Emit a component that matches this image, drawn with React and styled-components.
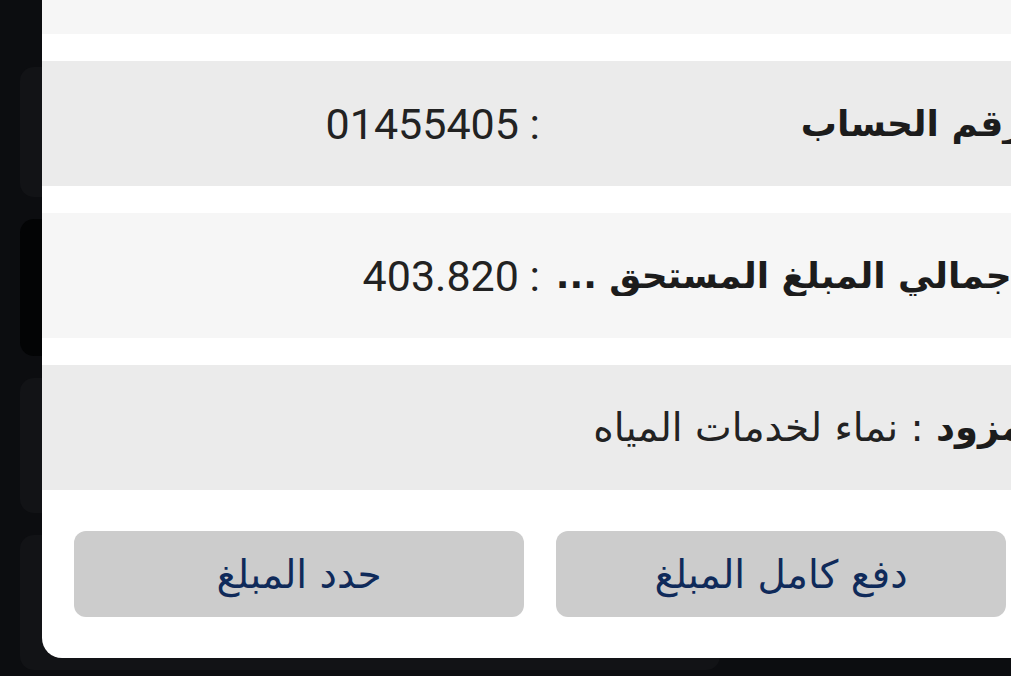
import React from 'react'
import styled, { createGlobalStyle } from 'styled-components'

const GlobalStyle = createGlobalStyle`
    html, body {
        margin: 0;
        padding: 0;
        width: 1011px;
        height: 676px;
        overflow: hidden;
        background: #0c0d10;
    }
    * {
        box-sizing: border-box;
    }
`

const arabic = `"DejaVu Sans", "Noto Sans Arabic", sans-serif`

const Screen = styled.div`
    position: relative;
    width: 1011px;
    height: 676px;
    overflow: hidden;
    background: #0c0d10;
`

const CardList = styled.div`
    display: flex;
    flex-direction: column;
    gap: 22px;
    padding: 67px 0 0 20px;
`

const BgCard = styled.div`
    height: ${p => p.h}px;
    width: 700px;
    border-radius: 14px;
    background: ${p => p.dark ? '#030405' : '#121316'};
`

const Sheet = styled.div`
    position: absolute;
    left: 42px;
    bottom: 18px;
    width: 996px;
    background: #ffffff;
    border-radius: 20px;
    display: flex;
    flex-direction: column;
    gap: 27px;
    direction: rtl;
`

const Row = styled.div`
    height: 125px;
    background: ${p => p.shade === 'dark' ? '#ebebeb' : '#f6f6f6'};
    display: flex;
    align-items: center;
    padding: 0 14px 0 0;
    color: #1c1c1c;
`

const Label = styled.span`
    width: ${p => p.w ? p.w + 'px' : 'auto'};
    flex: none;
    font-family: ${arabic};
    font-weight: 700;
    font-size: ${p => p.size || 36}px;
    white-space: nowrap;
    overflow: hidden;
    text-overflow: ellipsis;
`

const Value = styled.span`
    font-family: Roboto, "Liberation Sans", sans-serif;
    font-size: 43px;
    color: #222222;
    margin-right: 10px;
    white-space: nowrap;
`

const InlineText = styled.span`
    font-family: ${arabic};
    font-size: 39px;
    color: #222222;
    white-space: nowrap;
`

const Buttons = styled.div`
    display: flex;
    gap: 32px;
    padding: 14px 32px 41px;
`

const Button = styled.button`
    flex: 1;
    height: 86px;
    border: none;
    border-radius: 12px;
    background: #cccccc;
    color: #0f2a5a;
    font-family: ${arabic};
    font-size: 39px;
    cursor: pointer;
`

export default function App() {
    return (
        <Screen>
            <GlobalStyle />
            <CardList>
                <BgCard h={130} />
                <BgCard h={137} dark />
                <BgCard h={135} />
                <BgCard h={135} />
            </CardList>

            <Sheet>
                <Row shade="light" />
                <Row shade="dark">
                    <Label w={474}>رقم الحساب</Label>
                    <Value>: 01455405</Value>
                </Row>
                <Row shade="light">
                    <Label w={474}>إجمالي المبلغ المستحق ...</Label>
                    <Value>: 403.820</Value>
                </Row>
                <Row shade="dark">
                    <Label size={37}>مزود</Label>
                    <InlineText>&nbsp;:&nbsp;نماء لخدمات المياه</InlineText>
                </Row>
                <Buttons>
                    <Button>دفع كامل المبلغ</Button>
                    <Button>حدد المبلغ</Button>
                </Buttons>
            </Sheet>
        </Screen>
    )
}
